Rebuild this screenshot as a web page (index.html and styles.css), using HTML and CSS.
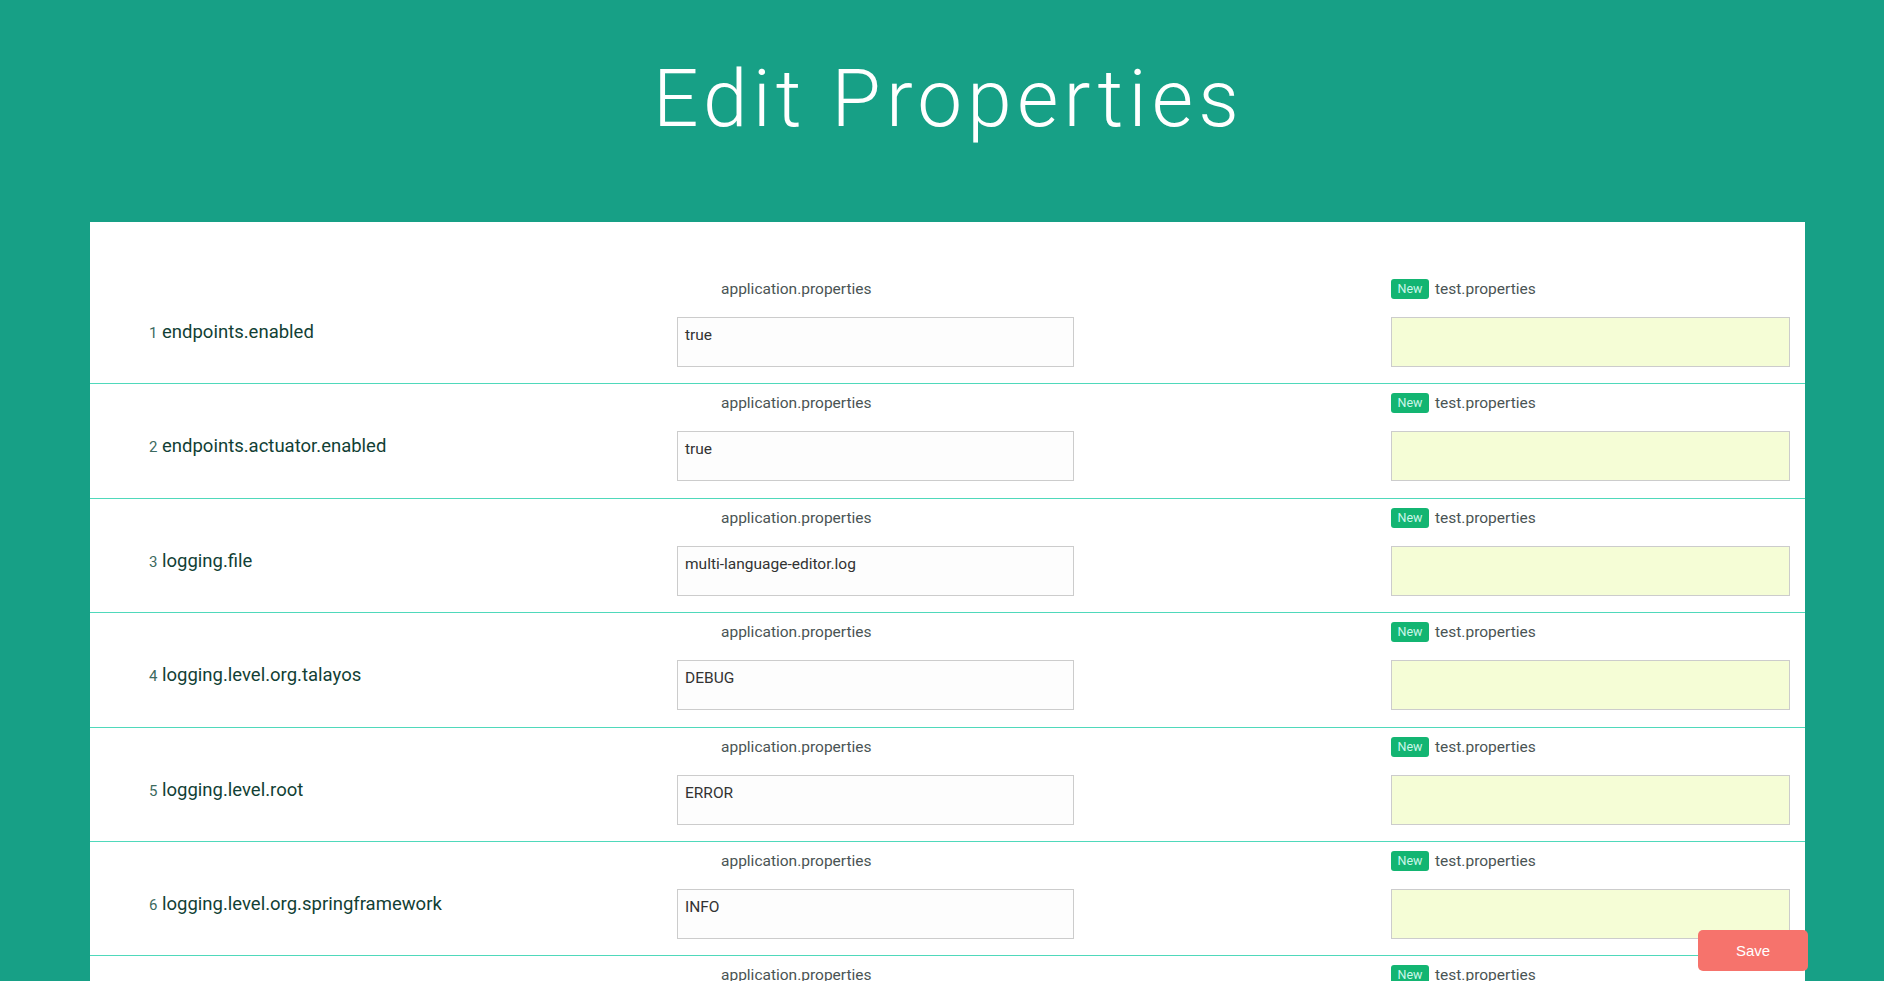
FILE: index.html
```html
<!DOCTYPE html>
<html lang="en">
<head>
<meta charset="utf-8">
<title>Edit Properties</title>
<link rel="stylesheet" href="styles.css">
</head>
<body>
<header class="hero">
  <h1 class="title">Edit Properties</h1>
</header>
<main class="panel">
  <div class="row">
    <div class="key"><span class="num">1</span> endpoints.enabled</div>
    <div class="col"><div class="file"><span class="badge hidden">New</span>application.properties</div><textarea class="val" readonly>true</textarea></div>
    <div class="col"><div class="file"><span class="badge">New</span>test.properties</div><textarea class="val new" readonly></textarea></div>
  </div>
  <div class="row">
    <div class="key"><span class="num">2</span> endpoints.actuator.enabled</div>
    <div class="col"><div class="file"><span class="badge hidden">New</span>application.properties</div><textarea class="val" readonly>true</textarea></div>
    <div class="col"><div class="file"><span class="badge">New</span>test.properties</div><textarea class="val new" readonly></textarea></div>
  </div>
  <div class="row">
    <div class="key"><span class="num">3</span> logging.file</div>
    <div class="col"><div class="file"><span class="badge hidden">New</span>application.properties</div><textarea class="val" readonly>multi-language-editor.log</textarea></div>
    <div class="col"><div class="file"><span class="badge">New</span>test.properties</div><textarea class="val new" readonly></textarea></div>
  </div>
  <div class="row">
    <div class="key"><span class="num">4</span> logging.level.org.talayos</div>
    <div class="col"><div class="file"><span class="badge hidden">New</span>application.properties</div><textarea class="val" readonly>DEBUG</textarea></div>
    <div class="col"><div class="file"><span class="badge">New</span>test.properties</div><textarea class="val new" readonly></textarea></div>
  </div>
  <div class="row">
    <div class="key"><span class="num">5</span> logging.level.root</div>
    <div class="col"><div class="file"><span class="badge hidden">New</span>application.properties</div><textarea class="val" readonly>ERROR</textarea></div>
    <div class="col"><div class="file"><span class="badge">New</span>test.properties</div><textarea class="val new" readonly></textarea></div>
  </div>
  <div class="row">
    <div class="key"><span class="num">6</span> logging.level.org.springframework</div>
    <div class="col"><div class="file"><span class="badge hidden">New</span>application.properties</div><textarea class="val" readonly>INFO</textarea></div>
    <div class="col"><div class="file"><span class="badge">New</span>test.properties</div><textarea class="val new" readonly></textarea></div>
  </div>
  <div class="row">
    <div class="key"></div>
    <div class="col"><div class="file"><span class="badge hidden">New</span>application.properties</div><textarea class="val" readonly></textarea></div>
    <div class="col"><div class="file"><span class="badge">New</span>test.properties</div><textarea class="val new" readonly></textarea></div>
  </div>
</main>
<button class="save" type="button">Save</button>
</body>
</html>
```
FILE: styles.css
```css
html, body {
  margin: 0;
  padding: 0;
}
body {
  background: #17a086;
  font-family: Roboto, "Liberation Sans", sans-serif;
  height: 981px;
  overflow: hidden;
}
.hero {
  height: 222px;
  box-sizing: border-box;
  padding-top: 54px;
  text-align: center;
}
.title {
  margin: 0;
  color: #ffffff;
  font-family: Roboto, sans-serif;
  font-weight: 300;
  font-size: 80px;
  line-height: 90px;
  letter-spacing: 5.2px;
  padding-left: 13px;
}
.panel {
  background: #ffffff;
  margin: 0 79px 0 90px;
  padding-top: 48px;
  min-height: 800px;
}
.row {
  display: grid;
  grid-template-columns: 528px 714px 399px;
  padding: 9px 15px 16.4px 59px;
  border-bottom: 1px solid #4fd9bb;
}
.key {
  padding-top: 41px;
  font-size: 18.5px;
  line-height: 24px;
  color: #123f35;
}
.num {
  font-size: 15px;
  color: #3c6a60;
}
.col {
  display: flex;
  flex-direction: column;
}
.file {
  display: flex;
  align-items: center;
  height: 20px;
  font-size: 15.5px;
  color: #4a5454;
}
.badge {
  display: inline-block;
  width: 38px;
  height: 20px;
  line-height: 20px;
  margin-right: 6px;
  border-radius: 3px;
  background: #13b572;
  color: #cbf7ea;
  font-size: 12.5px;
  text-align: center;
}
.badge.hidden {
  visibility: hidden;
}
.val {
  display: block;
  box-sizing: border-box;
  margin-top: 18px;
  width: 397px;
  height: 50px;
  padding: 7px 7px;
  border: 1px solid #cccccc;
  border-radius: 0;
  background: #fdfdfd;
  color: #333333;
  font-family: Roboto, sans-serif;
  font-size: 15.5px;
  line-height: 20px;
  resize: none;
  overflow: hidden;
  outline: none;
}
.val.new {
  width: 399px;
  background: #f5fdd6;
}
.save {
  position: fixed;
  right: 76px;
  bottom: 10px;
  width: 110px;
  height: 41px;
  border: none;
  border-radius: 5px;
  background: #f6736c;
  color: #ffffff;
  font-family: "Liberation Sans", Arial, sans-serif;
  font-size: 15px;
  cursor: pointer;
}
```
